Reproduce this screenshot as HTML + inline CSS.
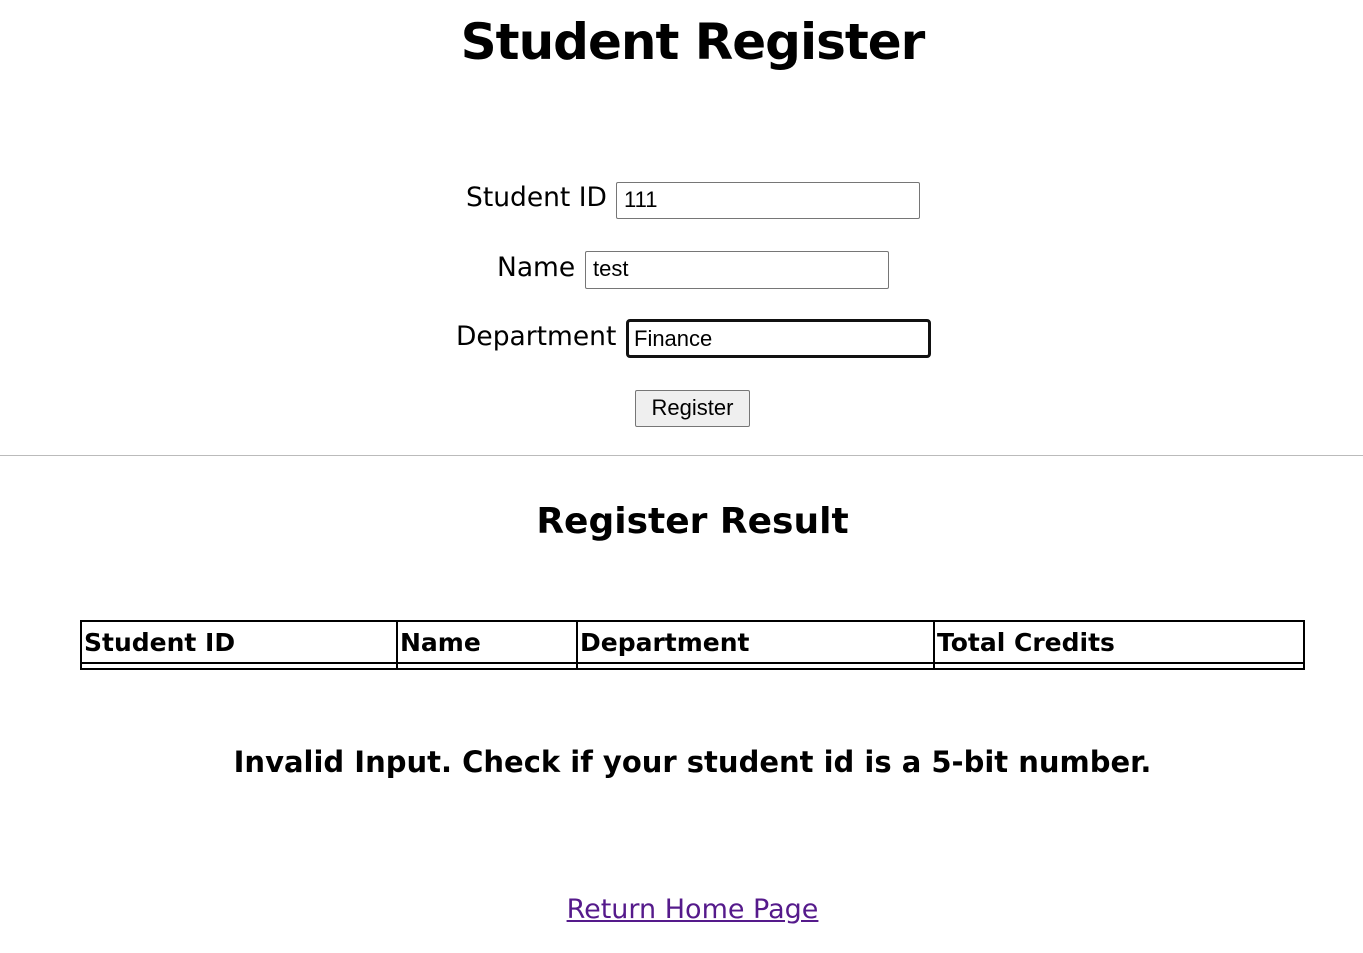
<!DOCTYPE html>
<html><head><meta charset="utf-8"><style>
body{margin:0;font-family:"DejaVu Sans","Liberation Sans",sans-serif;color:#000;background:#fff;width:1363px;height:953px;overflow:hidden;position:relative}
.a{position:absolute;white-space:nowrap}
h1{position:absolute;top:13px;left:0;width:1385px;text-align:center;margin:0;font-size:50px;font-weight:bold;letter-spacing:-1px}
.lbl{font-size:26.5px}
.inp{position:absolute;height:35px;border:1px solid #767676;border-radius:2px;box-sizing:border-box;font-family:"Liberation Sans",sans-serif;font-size:22px;padding:4px 7px}
.h{font-size:25px;font-weight:bold;top:628px}
</style></head><body>
<h1>Student Register</h1>
<div class="a lbl" style="left:466px;top:182px">Student ID</div>
<div class="inp" style="left:616px;top:182px;width:304px;height:37px">111</div>
<div class="a lbl" style="left:497px;top:252px">Name</div>
<div class="inp" style="left:585px;top:251px;width:304px;height:38px">test</div>
<div class="a lbl" style="left:456px;top:321px">Department</div>
<div class="inp" style="left:626px;top:319px;width:305px;height:39px;border:3px solid #111;border-radius:4px;padding:4px 5px">Finance</div>
<div class="inp" style="left:635px;top:390px;width:115px;height:37px;background:#efefef;text-align:center;padding:4px 0">Register</div>
<div class="a" style="left:0;top:455px;width:1363px;border-top:1px solid #bbb"></div>
<div class="a" style="left:0;top:501px;width:1385px;text-align:center;font-size:36px;font-weight:bold">Register Result</div>
<div class="a" style="left:80px;top:620px;width:1221px;height:46px;border:2px solid #000"></div>
<div class="a" style="left:82px;top:662px;width:1221px;border-top:2px solid #000"></div>
<div class="a" style="left:396px;top:622px;height:46px;border-left:2px solid #000"></div>
<div class="a" style="left:576px;top:622px;height:46px;border-left:2px solid #000"></div>
<div class="a" style="left:933px;top:622px;height:46px;border-left:2px solid #000"></div>
<div class="a h" style="left:84px">Student ID</div>
<div class="a h" style="left:400px">Name</div>
<div class="a h" style="left:580px">Department</div>
<div class="a h" style="left:937px">Total Credits</div>
<div class="a" style="left:0;top:745px;width:1385px;text-align:center;font-size:29px;font-weight:bold">Invalid Input. Check if your student id is a 5-bit number.</div>
<div class="a" style="left:0;top:894px;width:1385px;text-align:center;font-size:27px"><a href="#" style="color:#551a8b">Return Home Page</a></div>
</body></html>
